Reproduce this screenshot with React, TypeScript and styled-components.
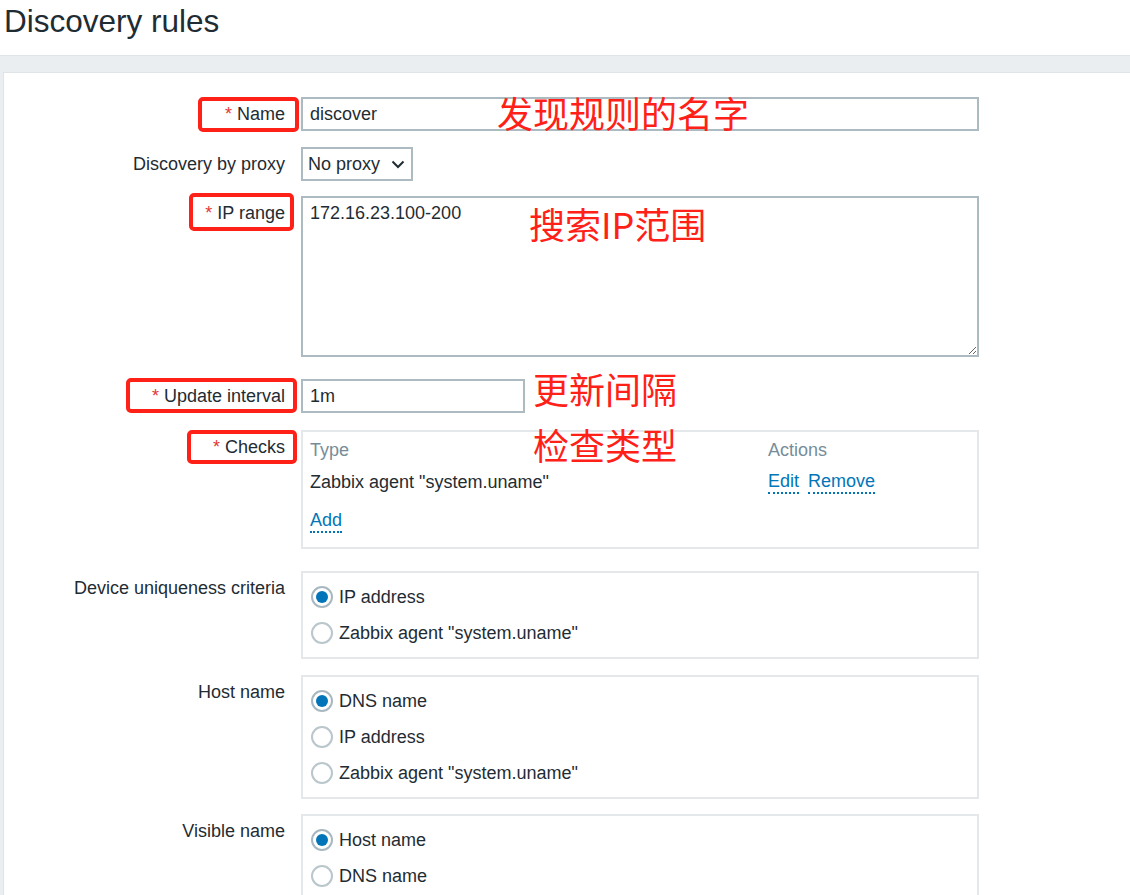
import styled, { createGlobalStyle } from "styled-components";

const GlobalStyle = createGlobalStyle`
  html, body {
    margin: 0;
    padding: 0;
    overflow: hidden;
  }
  body {
    font-family: "Liberation Sans", Arial, sans-serif;
    font-size: 18px;
    color: #1f2c33;
    background: #ebeef0;
  }
`;

const Page = styled.div`
  min-height: 100vh;
  background: #ebeef0;
`;

const Header = styled.header`
  box-sizing: border-box;
  height: 56px;
  padding: 3px 4px 0;
  background: #fff;
  border-bottom: 1px solid #dfe4e7;
`;

const Title = styled.h1`
  margin: 0;
  font-size: 31.5px;
  font-weight: normal;
  color: #1f2c33;
`;

const Main = styled.main`
  padding: 16px 0 0 3px;
`;

const Panel = styled.div`
  background: #fff;
  border: 1px solid #dfe4e7;
  border-right: none;
  padding: 24px 0 60px;
`;

const Row = styled.div<{ $top: number }>`
  position: relative;
  display: grid;
  grid-template-columns: 281px 678px;
  column-gap: 16px;
  margin-top: ${(p) => p.$top}px;
`;

const Label = styled.label`
  position: relative;
  text-align: right;
  line-height: 34px;
  white-space: nowrap;
`;

const Asterisk = styled.span`
  color: #e33734;
  margin-right: 5px;
`;

// red hand-drawn frame round a label
const Mark = styled.span<{ $x: number; $y: number; $w: number; $h: number }>`
  position: absolute;
  left: ${(p) => p.$x}px;
  top: ${(p) => p.$y}px;
  width: ${(p) => p.$w}px;
  height: ${(p) => p.$h}px;
  box-sizing: border-box;
  border: 4px solid #ff2118;
  border-radius: 5px;
  pointer-events: none;
`;

const Note = styled.span<{ $x: number; $y: number }>`
  position: absolute;
  left: ${(p) => p.$x}px;
  top: ${(p) => p.$y}px;
  font-family: "Noto Sans CJK SC", sans-serif;
  font-size: 36px;
  line-height: 36px;
  color: #ff2118;
  white-space: nowrap;
  pointer-events: none;
`;

const TextInput = styled.input<{ $w: number }>`
  box-sizing: border-box;
  width: ${(p) => p.$w}px;
  height: 34px;
  margin: 0;
  padding: 0 7px;
  border: 2px solid #acbbc2;
  border-radius: 0;
  font-family: "Liberation Sans", Arial, sans-serif;
  font-size: 18px;
  color: #1f2c33;
  background: #fff;
  outline: none;
`;

const TextArea = styled.textarea`
  box-sizing: border-box;
  width: 678px;
  height: 161px;
  margin: 0;
  padding: 4px 7px;
  border: 2px solid #acbbc2;
  border-radius: 0;
  font-family: "Liberation Sans", Arial, sans-serif;
  font-size: 18px;
  line-height: 22px;
  color: #1f2c33;
  resize: vertical;
  outline: none;
`;

const Select = styled.div`
  box-sizing: border-box;
  width: 112px;
  height: 34px;
  display: flex;
  align-items: center;
  justify-content: space-between;
  padding: 0 6px 0 5px;
  border: 2px solid #acbbc2;
  background: #fff;
`;

const Chevron = () => (
  <svg width="14" height="9" viewBox="0 0 14 9">
    <path d="M1.5 1.5 L7 7 L12.5 1.5" fill="none" stroke="#1f2c33" strokeWidth="2" />
  </svg>
);

const Box = styled.div`
  box-sizing: border-box;
  width: 678px;
  border: 2px solid #e4e8eb;
`;

const ChecksBox = styled(Box)`
  padding: 2px 7px 10px;
`;

const CheckGrid = styled.div`
  display: grid;
  grid-template-columns: 458px 1fr;
`;

const Cell = styled.div<{ $head?: boolean }>`
  height: 32px;
  line-height: 32px;
  color: ${(p) => (p.$head ? "#768d99" : "#1f2c33")};
  white-space: nowrap;
  display: flex;
  align-items: center;
  gap: 9px;
`;

const AddRow = styled.div`
  margin-top: 7px;
  height: 32px;
  display: flex;
  align-items: center;
`;

const Link = styled.a`
  color: #0275b8;
  text-decoration: none;
  border-bottom: 2px dotted #0275b8;
  line-height: normal;
  cursor: pointer;
`;

const RadioBox = styled(Box)`
  padding: 6px 8px;
`;

const RadioItem = styled.div`
  display: flex;
  align-items: center;
  gap: 6px;
  height: 36px;
`;

const Circle = styled.span<{ $on?: boolean }>`
  box-sizing: border-box;
  width: 22px;
  height: 22px;
  border-radius: 50%;
  border: 2px solid ${(p) => (p.$on ? "#a9b8c0" : "#b9c6cc")};
  display: flex;
  align-items: center;
  justify-content: center;
  &::after {
    content: "";
    display: ${(p) => (p.$on ? "block" : "none")};
    width: 12px;
    height: 12px;
    border-radius: 50%;
    background: #0275b8;
  }
`;

const RadioGroup = ({ options, checked }: { options: string[]; checked: number }) => (
  <RadioBox>
    {options.map((o, i) => (
      <RadioItem key={o}>
        <Circle $on={i === checked} />
        {o}
      </RadioItem>
    ))}
  </RadioBox>
);

const UNAME = 'Zabbix agent "system.uname"';

export default function App() {
  return (
    <Page>
      <GlobalStyle />
      <Header>
        <Title>Discovery rules</Title>
      </Header>
      <Main>
        <Panel>
          <Row $top={0}>
            <Label>
              <Mark $x={194} $y={0} $w={101} $h={35} />
              <Asterisk>*</Asterisk>Name
            </Label>
            <TextInput $w={678} value="discover" readOnly />
            <Note $x={493} $y={-3}>发现规则的名字</Note>
          </Row>

          <Row $top={16}>
            <Label>Discovery by proxy</Label>
            <Select>
              No proxy
              <Chevron />
            </Select>
          </Row>

          <Row $top={15}>
            <Label>
              <Mark $x={185} $y={-3} $w={105} $h={38} />
              <Asterisk>*</Asterisk>IP range
            </Label>
            <TextArea value="172.16.23.100-200" readOnly />
            <Note $x={525} $y={9}>搜索IP范围</Note>
          </Row>

          <Row $top={22}>
            <Label>
              <Mark $x={122} $y={-1} $w={171} $h={35} />
              <Asterisk>*</Asterisk>Update interval
            </Label>
            <TextInput $w={224} value="1m" readOnly />
            <Note $x={529} $y={-9}>更新间隔</Note>
          </Row>

          <Row $top={17}>
            <Label>
              <Mark $x={183} $y={0} $w={110} $h={34} />
              <Asterisk>*</Asterisk>Checks
            </Label>
            <ChecksBox>
              <CheckGrid>
                <Cell $head>Type</Cell>
                <Cell $head>Actions</Cell>
                <Cell>{UNAME}</Cell>
                <Cell>
                  <Link>Edit</Link>
                  <Link>Remove</Link>
                </Cell>
              </CheckGrid>
              <AddRow>
                <Link>Add</Link>
              </AddRow>
            </ChecksBox>
            <Note $x={529} $y={-4}>检查类型</Note>
          </Row>

          <Row $top={22}>
            <Label>Device uniqueness criteria</Label>
            <RadioGroup options={["IP address", UNAME]} checked={0} />
          </Row>

          <Row $top={16}>
            <Label>Host name</Label>
            <RadioGroup options={["DNS name", "IP address", UNAME]} checked={0} />
          </Row>

          <Row $top={15}>
            <Label>Visible name</Label>
            <RadioGroup options={["Host name", "DNS name"]} checked={0} />
          </Row>
        </Panel>
      </Main>
    </Page>
  );
}
